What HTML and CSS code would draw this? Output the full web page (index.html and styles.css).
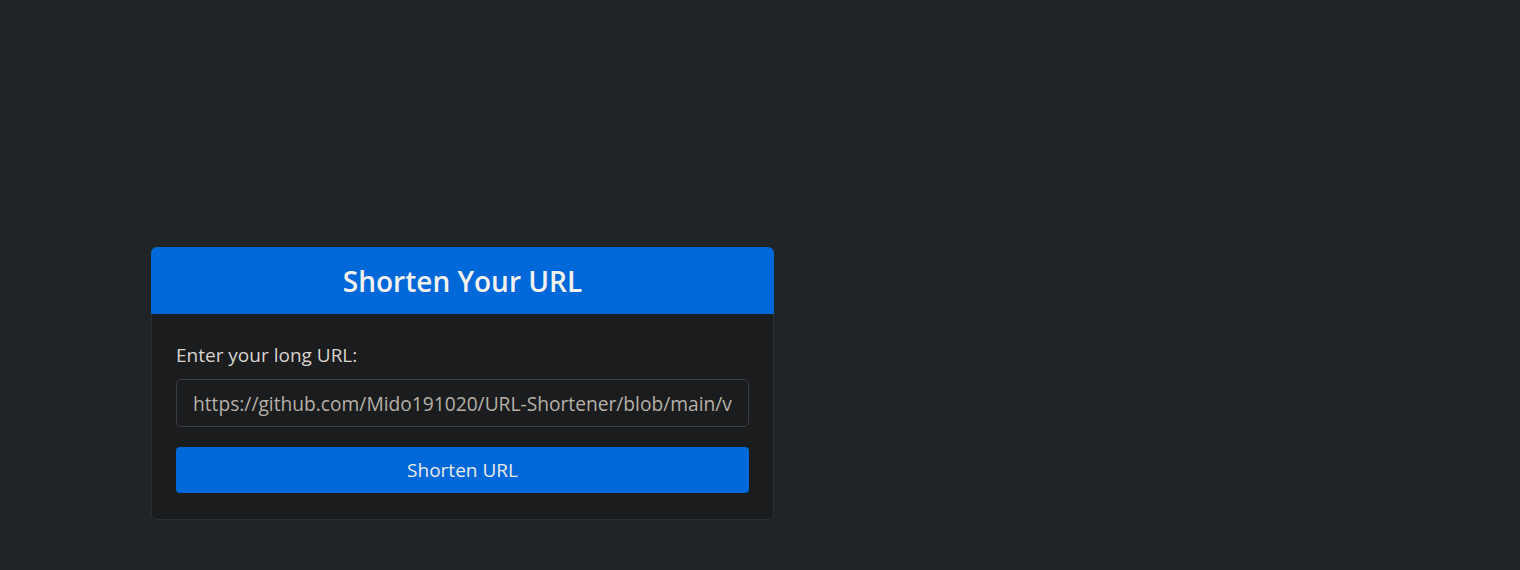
FILE: index.html
```html
<!DOCTYPE html>
<html lang="en">
<head>
<meta charset="utf-8">
<title>URL Shortener</title>
<link rel="stylesheet" href="styles.css">
</head>
<body>
<main class="page">
  <section class="card">
    <header class="card-header">
      <h3 class="card-title">Shorten Your URL</h3>
    </header>
    <form class="card-body">
      <label class="form-label" for="url">Enter your long URL:</label>
      <input class="form-control" id="url" type="text" value="https://github.com/Mido191020/URL-Shortener/blob/main/views/index.html">
      <button class="btn" type="button">Shorten URL</button>
    </form>
  </section>
</main>
</body>
</html>
```
FILE: styles.css
```css
html, body {
  margin: 0;
  padding: 0;
  background: #212427;
  height: 100%;
}
body {
  font-family: "Open Sans", "Noto Sans", sans-serif;
  color: #d8d4cf;
}
.page {
  padding: 247px 0 0 151px;
}
.card {
  width: 621px;
  background: #1b1c1e;
  border: 1px solid #2b2e32;
  border-radius: 6px;
}
.card-header {
  background: #0068d8;
  height: 67px;
  display: flex;
  align-items: center;
  justify-content: center;
  margin: -1px -1px 0;
  border-radius: 6px 6px 0 0;
}
.card-title {
  margin: 0;
  font-size: 28px;
  font-weight: 600;
  color: #f3f1ee;
}
.card-body {
  padding: 24px 24px 26px;
  display: flex;
  flex-direction: column;
}
.form-label {
  font-size: 19px;
  line-height: 29px;
  margin: 3px 0 9px;
}
.form-control {
  box-sizing: border-box;
  height: 48px;
  padding: 0 16px;
  font-family: inherit;
  font-size: 19.2px;
  color: #b5b0a8;
  background: #1b1c1e;
  border: 1px solid #3a3d41;
  border-radius: 5px;
  outline: none;
}
.btn {
  margin-top: 20px;
  height: 46px;
  border: 0;
  border-radius: 4px;
  background: #0068d8;
  color: #ecebe8;
  font-family: inherit;
  font-size: 19px;
  cursor: pointer;
}
```
